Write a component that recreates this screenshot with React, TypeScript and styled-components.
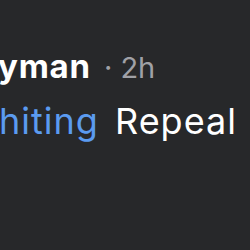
import React from 'react';
import styled, { createGlobalStyle } from 'styled-components';

const GlobalStyle = createGlobalStyle`
  html, body {
    margin: 0;
    padding: 0;
    background: #27282a;
  }
`;

const Screen = styled.div`
  width: 250px;
  height: 250px;
  background: #27282a;
  overflow: hidden;
  display: flex;
  flex-direction: column;
  gap: 6px;
  padding-top: 46px;
  box-sizing: border-box;
  font-family: Inter, 'Noto Sans', sans-serif;
  -webkit-font-smoothing: antialiased;
`;

const MetaRow = styled.div`
  display: flex;
  align-items: baseline;
  white-space: nowrap;
  line-height: 40px;
  margin-left: -2px;
`;

const Author = styled.span`
  font-size: 33px;
  font-weight: 700;
  letter-spacing: 0.8px;
  color: #ffffff;
`;

const Meta = styled.span`
  font-size: 29px;
  font-weight: 400;
  color: #a0a1a6;
  margin-left: 13px;
`;

const Headline = styled.div`
  white-space: nowrap;
  font-size: 36px;
  line-height: 54px;
  letter-spacing: 1px;
  word-spacing: 5px;
  color: #ffffff;
  margin-left: -1px;
`;

const Link = styled.span<{ $color: string }>`
  color: ${p => p.$color};
`;

export default function App() {
  return (
    <>
      <GlobalStyle />
      <Screen>
        <MetaRow>
          <Author>yman</Author>
          <Meta>· 2h</Meta>
        </MetaRow>
        <Headline>
          <Link $color="#5b9bf0">hiting</Link> Repeal
        </Headline>
      </Screen>
    </>
  );
}
